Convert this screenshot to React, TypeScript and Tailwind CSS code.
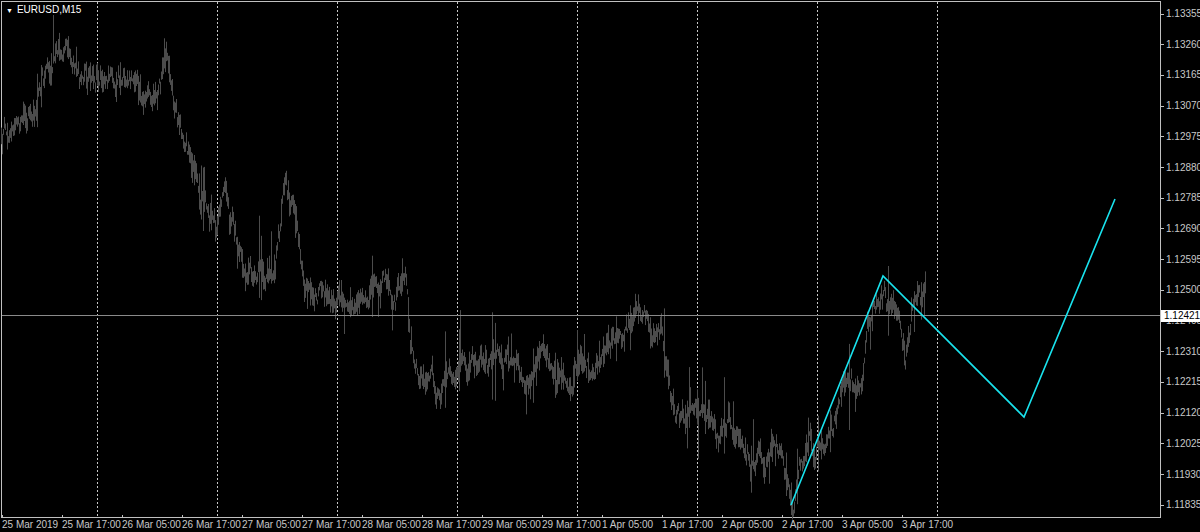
import React from "react";

const keys: [number, number][] = [
  [0,135],[12,125],[25,115],[40,90],[55,62],[68,42],[80,72],[95,85],[110,80],[125,75],[145,88],[160,68],[167,55],[175,110],[185,150],[200,185],[215,235],[225,200],[240,262],[255,272],[265,268],[275,272],[285,185],[295,215],[305,285],[320,292],[335,302],[350,292],[370,282],[385,272],[395,300],[405,272],[410,340],[420,372],[430,362],[440,382],[455,372],[470,362],[490,362],[505,356],[520,372],[540,352],[555,382],[570,397],[580,362],[600,357],[615,342],[630,322],[640,302],[650,342],[660,332],[670,392],[680,422],[695,425],[710,435],[730,430],[745,445],[760,452],[775,432],[785,470],[792,500],[800,470],[810,442],[820,447],[830,432],[840,392],[850,377],[860,382],[868,320],[878,300],[890,305],[900,322],[905,352],[910,332],[918,308],[925,310],
];

function rng(seed: number) {
  let s = seed;
  return () => {
    s = (s * 1103515245 + 12345) & 0x7fffffff;
    return s / 0x7fffffff;
  };
}

function buildBars() {
  const r = rng(7);
  let d = "";
  let noise = 0;
  for (let x = 1; x <= 925; x++) {
    let k = 0;
    while (k < keys.length - 2 && keys[k + 1][0] < x) k++;
    const [x0, y0] = keys[k];
    const [x1, y1] = keys[k + 1];
    const t = Math.min(1, Math.max(0, (x - x0) / (x1 - x0)));
    const base = y0 + (y1 - y0) * t;
    noise = noise * 0.85 + (r() - 0.5) * 16;
    const c = base + noise;
    const spread = 4 + r() * 14 + (r() < 0.1 ? r() * 40 : 0);
    const top = c - spread * r();
    const bot = c + spread * r() + 3;
    d += `M${x + 0.5} ${top.toFixed(1)}V${bot.toFixed(1)}`;
  }
  return d;
}

const bars = buildBars();

const prices = ["1.13355","1.13260","1.13165","1.13070","1.12975","1.12880","1.12785","1.12690","1.12595","1.12500","1.12405","1.12310","1.12215","1.12120","1.12025","1.11930","1.11835"];
const dates = ["25 Mar 2019","25 Mar 17:00","26 Mar 05:00","26 Mar 17:00","27 Mar 05:00","27 Mar 17:00","28 Mar 05:00","28 Mar 17:00","29 Mar 05:00","29 Mar 17:00","1 Apr 05:00","1 Apr 17:00","2 Apr 05:00","2 Apr 17:00","3 Apr 05:00","3 Apr 17:00"];

export default function App() {
  return (
    <div className="relative w-[1200px] h-[532px] bg-black overflow-hidden text-[#c8c8c8]" style={{ fontFamily: "'Liberation Sans', Arial, sans-serif" }}>
      <div className="flex h-[518px] pl-[1px] pt-[1px]">
        <div className="w-[1160px] h-[517px] border border-[#c0c0c0] relative">
          <div className="flex items-center gap-[4px] pl-[4px] pt-[3px] text-[10px] text-white leading-none whitespace-nowrap">
            <span className="text-[7px]">▼</span>
            <span>EURUSD,M15</span>
          </div>
        </div>
        <div className="relative flex-1">
          {prices.map((p, i) => (
            <div key={p} className="absolute left-0 flex items-center text-[10px] leading-none whitespace-nowrap" style={{ top: 14 + i * 30.7 - 6 }}>
              <span className="w-[3px] h-px bg-[#c0c0c0]" />
              <span className="ml-[2px]">{p}</span>
            </div>
          ))}
          <div className="absolute left-0 top-[309px] bg-white text-black text-[10px] leading-none px-[3px] py-[1px] whitespace-nowrap">1.12421</div>
        </div>
      </div>
      <div className="flex pl-[2px] text-[10px] leading-none">
        {dates.map((d) => (
          <div key={d} className="w-[60px] shrink-0 relative whitespace-nowrap">
            <span className="absolute left-0 -top-[3px] w-px h-[3px] bg-[#c0c0c0]" />
            <span className="block pt-[2px]">{d}</span>
          </div>
        ))}
      </div>
      <svg className="absolute left-0 top-0 pointer-events-none" width="1200" height="532">
        {[97, 217, 337, 457, 577, 697, 817, 937].map((x) => (
          <line key={x} x1={x + 0.5} y1={2} x2={x + 0.5} y2={517} stroke="#c8c8c8" strokeDasharray="2 2" />
        ))}
        <path d={bars} stroke="#4c4c4c" strokeWidth="1" fill="none" />
        <line x1={2} y1={315.5} x2={1160} y2={315.5} stroke="#8a8a8a" />
        <polyline points="791,505 883,276 1024,417 1115,199" stroke="#19e3ee" strokeWidth="1.6" fill="none" />
      </svg>
    </div>
  );
}
